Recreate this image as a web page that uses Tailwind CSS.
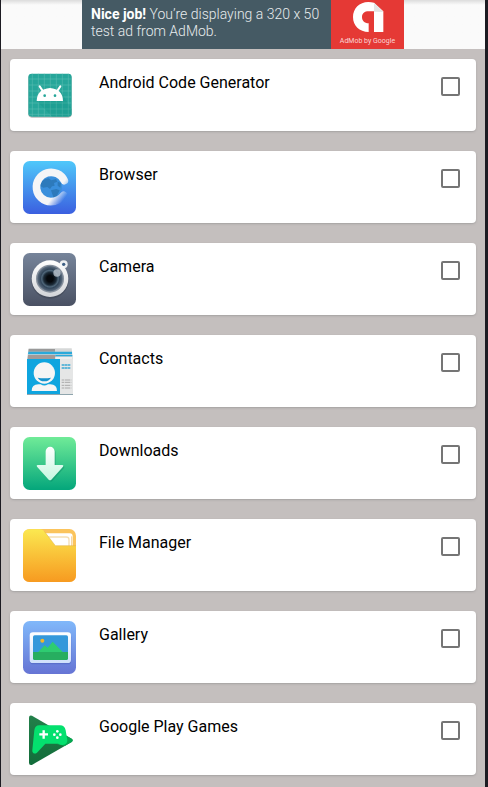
<!DOCTYPE html>
<html lang="en">
  <head>
    <meta charset="UTF-8" />
    <meta name="viewport" content="width=device-width, initial-scale=1.0" />
    <title>Apps</title>
    <script src="https://cdn.jsdelivr.net/npm/@tailwindcss/browser@4"></script>
  </head>
  <body class="bg-[#c4bfbe] font-[Roboto,sans-serif] text-black">
    <div class="min-h-screen border-l border-r-3 border-[#1c1b22]">
      <!-- Ad banner -->
      <header class="flex h-[49px] justify-center bg-[#fafafa] bg-linear-to-b from-[#dcdcdc] to-[#fafafa] to-10%">
        <a href="#" class="flex w-[322px]">
          <p class="flex-1 bg-[#455a64] pt-[6px] pl-[9px] text-[14px] leading-[17px] font-light whitespace-nowrap text-[#e8ecee]">
            <b class="font-bold text-white">Nice job!</b> You’re displaying a 320 x 50<br />test ad from AdMob.
          </p>
          <div class="flex w-[73px] shrink-0 flex-col items-center bg-[#e53935]">
            <svg class="h-[35px] w-[32px] shrink-0" viewBox="0 0 96 105">
              <path d="M49 6C22 6 3 26 3 51c0 26 19 45 47 45V70c-13 0-20-8-20-19s8-17 20-17h16v62h28V34L66 8Q58 6 49 6z" fill="#fff" />
              <path d="M66 35L94 36 66 8z" fill="#e4e4e4" />
            </svg>
            <span class="text-[7px] leading-[12px] whitespace-nowrap text-[#fbd5d4]">AdMob by Google</span>
          </div>
        </a>
      </header>

      <!-- App list -->
      <main>
        <ul class="flex flex-col gap-5 px-[9px] py-[10px]">
          <li class="flex h-18 rounded-[4px] bg-white pr-4 pl-[13px] shadow-[0_1px_2px_#8888]">
            <svg class="mt-[10px] h-[53px] w-[53px] shrink-0" viewBox="0 0 159 159">
              <rect x="16" y="17" width="130" height="129" rx="10" fill="#bbb" />
              <rect x="16" y="14" width="130" height="129" rx="10" fill="#26a69a" />
              <path d="M28 14v129M46 14v129M64 14v129M82 14v129M100 14v129M118 14v129M136 14v129M16 30h130M16 48h130M16 66h130M16 84h130M16 102h130M16 120h130M16 136h130" stroke="#63c1b7" stroke-width="1.5" />
              <path d="M41 96l47 47h52q6 0 6-8v-14l-33-55z" fill="#008577" opacity=".2" />
              <path d="M41 96Q42 60 81 57q38 3 39 39z" fill="#fff" />
              <path d="M50 52l10 15M112 52l-10 15" stroke="#fff" stroke-width="6" stroke-linecap="round" />
              <circle cx="65" cy="80" r="4" fill="#26a69a" />
              <circle cx="96" cy="80" r="4" fill="#26a69a" />
            </svg>
            <label for="app-1" class="flex-1 pt-[14px] pl-[23px] text-base leading-5">Android Code Generator</label>
            <input id="app-1" type="checkbox" class="mt-[18px] size-[19px] appearance-none rounded-[2px] border-2 border-[#757575] checked:bg-teal-600" />
          </li>
          <li class="flex h-18 rounded-[4px] bg-white pr-4 pl-[13px] shadow-[0_1px_2px_#8888]">
            <svg class="mt-[10px] h-[53px] w-[53px] shrink-0" viewBox="0 0 159 159">
              <defs>
                <linearGradient id="browser-bg" x2="0" y2="1">
                  <stop stop-color="#4fc8fa" />
                  <stop offset="1" stop-color="#3b5fe0" />
                </linearGradient>
                <linearGradient id="browser-ring" gradientUnits="userSpaceOnUse" x1="95" y1="90" x2="125" y2="112">
                  <stop offset=".15" stop-color="#f5f5f7" />
                  <stop offset="1" stop-color="#f5f5f7" stop-opacity="0" />
                </linearGradient>
              </defs>
              <rect width="159" height="159" rx="20" fill="url(#browser-bg)" />
              <circle cx="83" cy="78" r="34" fill="#3a8fdc" />
              <path d="M53 66q10-13 24-14l8 6 14-4 4 8-10 4 2 8-8 2-6 8-8-6-12 2-8-4zM84 88l16-4 10 4-8 16-10 6-4-10zM104 62l10 4-2 14-8-6z" fill="#2d7abb" />
              <path d="M124 59A44 44 0 1 0 83 122Q108 121 122 103" fill="none" stroke="url(#browser-ring)" stroke-width="23" stroke-linecap="round" />
            </svg>
            <label for="app-2" class="flex-1 pt-[14px] pl-[23px] text-base leading-5">Browser</label>
            <input id="app-2" type="checkbox" class="mt-[18px] size-[19px] appearance-none rounded-[2px] border-2 border-[#757575] checked:bg-teal-600" />
          </li>
          <li class="flex h-18 rounded-[4px] bg-white pr-4 pl-[13px] shadow-[0_1px_2px_#8888]">
            <svg class="mt-[10px] h-[53px] w-[53px] shrink-0" viewBox="0 0 159 159">
              <defs>
                <linearGradient id="camera-bg" x2="0" y2="1">
                  <stop stop-color="#76849a" />
                  <stop offset="1" stop-color="#4a5163" />
                </linearGradient>
                <linearGradient id="camera-ring" x2="0" y2="1">
                  <stop stop-color="#fff" />
                  <stop offset="1" stop-color="#d2d4d8" />
                </linearGradient>
                <radialGradient id="camera-lens">
                  <stop offset=".25" stop-color="#05080c" />
                  <stop offset=".5" stop-color="#1c2b38" />
                  <stop offset=".65" stop-color="#50677a" />
                  <stop offset=".75" stop-color="#33465a" />
                  <stop offset="1" stop-color="#5d6d80" />
                </radialGradient>
              </defs>
              <rect width="159" height="159" rx="20" fill="url(#camera-bg)" />
              <circle cx="81" cy="81" r="56" fill="#2d3340" opacity=".35" />
              <circle cx="122" cy="34" r="12" fill="#eef0f2" />
              <circle cx="81" cy="77" r="55" fill="url(#camera-ring)" />
              <circle cx="122" cy="34" r="5" fill="#3d5f85" />
              <circle cx="81" cy="77" r="42" fill="#858f9c" />
              <circle cx="81" cy="77" r="38" fill="url(#camera-lens)" />
              <circle cx="102" cy="60" r="11" fill="#c4ccd4" opacity=".75" />
            </svg>
            <label for="app-3" class="flex-1 pt-[14px] pl-[23px] text-base leading-5">Camera</label>
            <input id="app-3" type="checkbox" class="mt-[18px] size-[19px] appearance-none rounded-[2px] border-2 border-[#757575] checked:bg-teal-600" />
          </li>
          <li class="flex h-18 rounded-[4px] bg-white pr-4 pl-[13px] shadow-[0_1px_2px_#8888]">
            <svg class="mt-[10px] h-[53px] w-[53px] shrink-0" viewBox="0 0 159 159">
              <path d="M17 10h129l4 32v107H12V42z" fill="#d6d8d8" />
              <path d="M17 12h79v8H16z" fill="#999" />
              <path d="M16 20h131v8H15z" fill="#2aa9da" />
              <path d="M15 30h82v12H14z" fill="#a29a98" />
              <path d="M97 30h51v4H97z" fill="#2aa9da" />
              <path d="M97 36h51v6H97z" fill="#eee" />
              <path d="M12 42h99v107H12z" fill="#0fa5df" />
              <path d="M111 42h39v107h-39z" fill="#e5e6e6" />
              <path d="M12 147h138v3H12z" fill="#8fa5ad" />
              <circle cx="64" cy="84" r="32" fill="#f5f5f5" />
              <path d="M44 98q20 4 40 0-6 11-20 11T44 98z" fill="#1692cc" />
              <path d="M26 138q0-20 20-20h7q11 7 22 0h7q20 0 20 20z" fill="#f5f5f5" />
              <path d="M116 60h26M116 69h26" stroke="#39a9d4" stroke-width="4" stroke-dasharray="8 1" />
              <path d="M116 105h29M116 112h29M116 121h29M116 129h29" stroke="#aaa" stroke-width="3" stroke-dasharray="7 2 16 2" />
            </svg>
            <label for="app-4" class="flex-1 pt-[14px] pl-[23px] text-base leading-5">Contacts</label>
            <input id="app-4" type="checkbox" class="mt-[18px] size-[19px] appearance-none rounded-[2px] border-2 border-[#757575] checked:bg-teal-600" />
          </li>
          <li class="flex h-18 rounded-[4px] bg-white pr-4 pl-[13px] shadow-[0_1px_2px_#8888]">
            <svg class="mt-[10px] h-[53px] w-[53px] shrink-0" viewBox="0 0 159 159">
              <defs>
                <linearGradient id="downloads-bg" x2="0" y2="1">
                  <stop stop-color="#70eb98" />
                  <stop offset="1" stop-color="#04a67b" />
                </linearGradient>
                <linearGradient id="downloads-arrow" x2="0" y2="1">
                  <stop stop-color="#fff" />
                  <stop offset="1" stop-color="#c4f7e0" />
                </linearGradient>
              </defs>
              <rect width="159" height="159" rx="20" fill="url(#downloads-bg)" />
              <path d="M68 43a13 13 0 0 1 27 0v41h23q5 1 2 5l-35 39q-4 3-8 0L42 89q-3-4 2-5h24z" transform="translate(3 4)" fill="#067f5e" opacity=".35" />
              <path d="M68 43a13 13 0 0 1 27 0v41h23q5 1 2 5l-35 39q-4 3-8 0L42 89q-3-4 2-5h24z" fill="url(#downloads-arrow)" />
            </svg>
            <label for="app-5" class="flex-1 pt-[14px] pl-[23px] text-base leading-5">Downloads</label>
            <input id="app-5" type="checkbox" class="mt-[18px] size-[19px] appearance-none rounded-[2px] border-2 border-[#757575] checked:bg-teal-600" />
          </li>
          <li class="flex h-18 rounded-[4px] bg-white pr-4 pl-[13px] shadow-[0_1px_2px_#8888]">
            <svg class="mt-[10px] h-[53px] w-[53px] shrink-0" viewBox="0 0 159 159">
              <defs>
                <linearGradient id="files-front" x2="0" y2="1">
                  <stop stop-color="#fbe850" />
                  <stop offset="1" stop-color="#f79a20" />
                </linearGradient>
              </defs>
              <rect width="159" height="159" rx="20" fill="#fbc45c" />
              <path d="M60 13h80q9 0 9 9v40H60z" fill="#fff" />
              <path d="M72 24h58q8 0 8 8v30" fill="none" stroke="#f5dfb4" stroke-width="4" />
              <path d="M146 22v36" stroke="#f3cf94" stroke-width="3" />
              <path d="M20 1h32q7 0 12 6l33 43h62v89q0 20-20 20H20q-20 0-20-20V21Q0 1 20 1z" fill="url(#files-front)" />
              <path d="M64 7l33 43h62" fill="none" stroke="#e0b040" stroke-width="1.5" />
            </svg>
            <label for="app-6" class="flex-1 pt-[14px] pl-[23px] text-base leading-5">File Manager</label>
            <input id="app-6" type="checkbox" class="mt-[18px] size-[19px] appearance-none rounded-[2px] border-2 border-[#757575] checked:bg-teal-600" />
          </li>
          <li class="flex h-18 rounded-[4px] bg-white pr-4 pl-[13px] shadow-[0_1px_2px_#8888]">
            <svg class="mt-[10px] h-[53px] w-[53px] shrink-0" viewBox="0 0 159 159">
              <defs>
                <linearGradient id="gallery-bg" x2="0" y2="1">
                  <stop stop-color="#80b8fa" />
                  <stop offset="1" stop-color="#6674d4" />
                </linearGradient>
                <linearGradient id="gallery-frame" x2="0" y2="1">
                  <stop stop-color="#fff" />
                  <stop offset="1" stop-color="#cfe0fb" />
                </linearGradient>
              </defs>
              <rect width="159" height="159" rx="20" fill="url(#gallery-bg)" />
              <rect x="20" y="38" width="125" height="92" rx="11" fill="#3c4fae" opacity=".35" />
              <rect x="20" y="34" width="124" height="92" rx="10" fill="url(#gallery-frame)" />
              <rect x="30" y="43" width="105" height="74" rx="5" fill="#3498db" />
              <circle cx="58" cy="59" r="6" fill="#f0b62b" />
              <path d="M45 94l20-21 9 7 15-18 31 32z" fill="#2ecc71" />
              <path d="M30 93h105v19q0 5-5 5H35q-5 0-5-5z" fill="#27ae60" />
            </svg>
            <label for="app-7" class="flex-1 pt-[14px] pl-[23px] text-base leading-5">Gallery</label>
            <input id="app-7" type="checkbox" class="mt-[18px] size-[19px] appearance-none rounded-[2px] border-2 border-[#757575] checked:bg-teal-600" />
          </li>
          <li class="flex h-18 rounded-[4px] bg-white pr-4 pl-[13px] shadow-[0_1px_2px_#8888]">
            <svg class="mt-[10px] h-[53px] w-[53px] shrink-0" viewBox="0 0 159 159">
              <defs>
                <linearGradient id="games-bg" x2="0" y2="1">
                  <stop stop-color="#23804a" />
                  <stop offset="1" stop-color="#126c3a" />
                </linearGradient>
              </defs>
              <path d="M18 14q0-9 9-6l119 69q6 5 0 10L28 155q-10 3-10-6z" fill="url(#games-bg)" />
              <path d="M130 68l16 9q6 5 0 10l-21 12-22-5z" fill="#04a850" />
              <path d="M49 37h62q14 0 17 15l5 30q0 13-14 14-7 0-13-4H67l-25 27q-7 5-12 0-3-3-2-9l6-58q2-15 15-15z" fill="#04e06e" />
              <path d="M62 52v25M49 64h26" stroke="#fff" stroke-width="7" />
              <g fill="#fff">
                <circle cx="103" cy="55" r="4" />
                <circle cx="103" cy="74" r="4" />
                <circle cx="94" cy="65" r="4" />
                <circle cx="112" cy="65" r="4" />
              </g>
            </svg>
            <label for="app-8" class="flex-1 pt-[14px] pl-[23px] text-base leading-5">Google Play Games</label>
            <input id="app-8" type="checkbox" class="mt-[18px] size-[19px] appearance-none rounded-[2px] border-2 border-[#757575] checked:bg-teal-600" />
          </li>
        </ul>
      </main>
    </div>
  </body>
</html>
